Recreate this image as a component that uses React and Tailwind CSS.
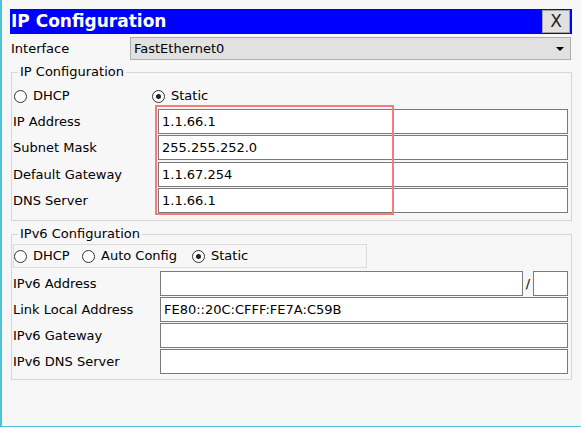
import React from "react";

function Radio({ checked }) {
	return (
		<span className="flex h-[13px] w-[13px] items-center justify-center rounded-full border border-[#333] bg-white">
			{checked && <span className="h-[5px] w-[5px] rounded-full bg-[#222]" />}
		</span>
	);
}

function RadioItem({ label, checked, className }) {
	return (
		<div className={"flex items-center gap-[6px] " + (className || "")}>
			<Radio checked={checked} />
			<span>{label}</span>
		</div>
	);
}

function Row({ label, value, labelWidth, inputWidth }) {
	return (
		<div className="flex h-[25px] items-center">
			<span className={"pl-[1px] " + labelWidth}>{label}</span>
			<div
				className={
					"flex h-[25px] items-center border border-[#7a7a7a] bg-white pl-[3px] " +
					inputWidth
				}
			>
				{value}
			</div>
		</div>
	);
}

export default function App() {
	return (
		<div className="relative h-[427px] w-[581px] overflow-hidden border-b border-l-2 border-[#4cc3d8] bg-[#f7f7f7] font-['DejaVu_Sans',sans-serif] text-[13px] leading-[16px] text-black">
			<div className="pl-[8px] pt-[9px]">
				{/* title bar */}
				<div className="flex h-[25px] w-[562px] justify-between bg-[#0000ff] pl-[1px] pr-[2px]">
					<span className="self-center text-[17px] font-bold leading-none text-white">
						IP Configuration
					</span>
					<div className="mt-[1px] flex h-[23px] w-[28px] items-center justify-center border border-[#a3a3a3] bg-[#e1e1e1] text-[17px] leading-none text-[#222]">
						X
					</div>
				</div>

				{/* interface */}
				<div className="mt-[3px] flex h-[23px] items-center">
					<span className="w-[120px] pl-[1px]">Interface</span>
					<div className="flex h-[23px] w-[441px] items-center justify-between border border-[#adadad] bg-[#e1e1e1] pl-[3px] pr-[6px]">
						<span>FastEthernet0</span>
						<span className="h-0 w-0 border-x-[4px] border-t-[4px] border-x-transparent border-t-black" />
					</div>
				</div>

				{/* IPv4 */}
				<fieldset className="ml-[1px] mt-[4px] w-[561px] border border-[#d6d6d6] pb-[7px]">
					<legend className="ml-[6px] px-[2px] leading-[16px]">IP Configuration</legend>
					<div className="mt-[4px] flex h-[24px] items-center pl-[2px]">
						<RadioItem label="DHCP" className="w-[138px]" />
						<RadioItem label="Static" checked />
					</div>
					<div className="mt-[1px] flex flex-col gap-[1px]">
						<Row label="IP Address" value="1.1.66.1" labelWidth="w-[146px]" inputWidth="w-[410px]" />
						<Row label="Subnet Mask" value="255.255.252.0" labelWidth="w-[146px]" inputWidth="w-[410px]" />
						<div className="mt-[1px]">
							<Row label="Default Gateway" value="1.1.67.254" labelWidth="w-[146px]" inputWidth="w-[410px]" />
						</div>
						<Row label="DNS Server" value="1.1.66.1" labelWidth="w-[146px]" inputWidth="w-[410px]" />
					</div>
				</fieldset>

				{/* IPv6 */}
				<fieldset className="ml-[1px] mt-[5px] w-[561px] border border-[#d6d6d6] pb-[5px]">
					<legend className="ml-[6px] px-[2px] leading-[16px]">IPv6 Configuration</legend>
					<div className="ml-[1px] mt-[2px] flex h-[24px] w-[354px] items-center border border-[#dcdcdc]">
						<RadioItem label="DHCP" className="w-[68px]" />
						<RadioItem label="Auto Config" className="w-[110px]" />
						<RadioItem label="Static" checked />
					</div>
					<div className="mt-[3px] flex flex-col gap-[1px]">
						<div className="flex h-[25px] items-center">
							<span className="w-[148px] pl-[1px]">IPv6 Address</span>
							<div className="h-[25px] w-[363px] border border-[#7a7a7a] bg-white" />
							<span className="w-[10px] text-center">/</span>
							<div className="h-[25px] w-[35px] border border-[#7a7a7a] bg-white" />
						</div>
						<Row label="Link Local Address" value="FE80::20C:CFFF:FE7A:C59B" labelWidth="w-[148px]" inputWidth="w-[408px]" />
						<Row label="IPv6 Gateway" value="" labelWidth="w-[148px]" inputWidth="w-[408px]" />
						<Row label="IPv6 DNS Server" value="" labelWidth="w-[148px]" inputWidth="w-[408px]" />
					</div>
				</fieldset>
			</div>

			{/* red highlight drawn over the IPv4 fields */}
			<div className="absolute left-[153px] top-[105px] h-[110px] w-[239px] border-2 border-[#fa7a7a]" />
		</div>
	);
}
